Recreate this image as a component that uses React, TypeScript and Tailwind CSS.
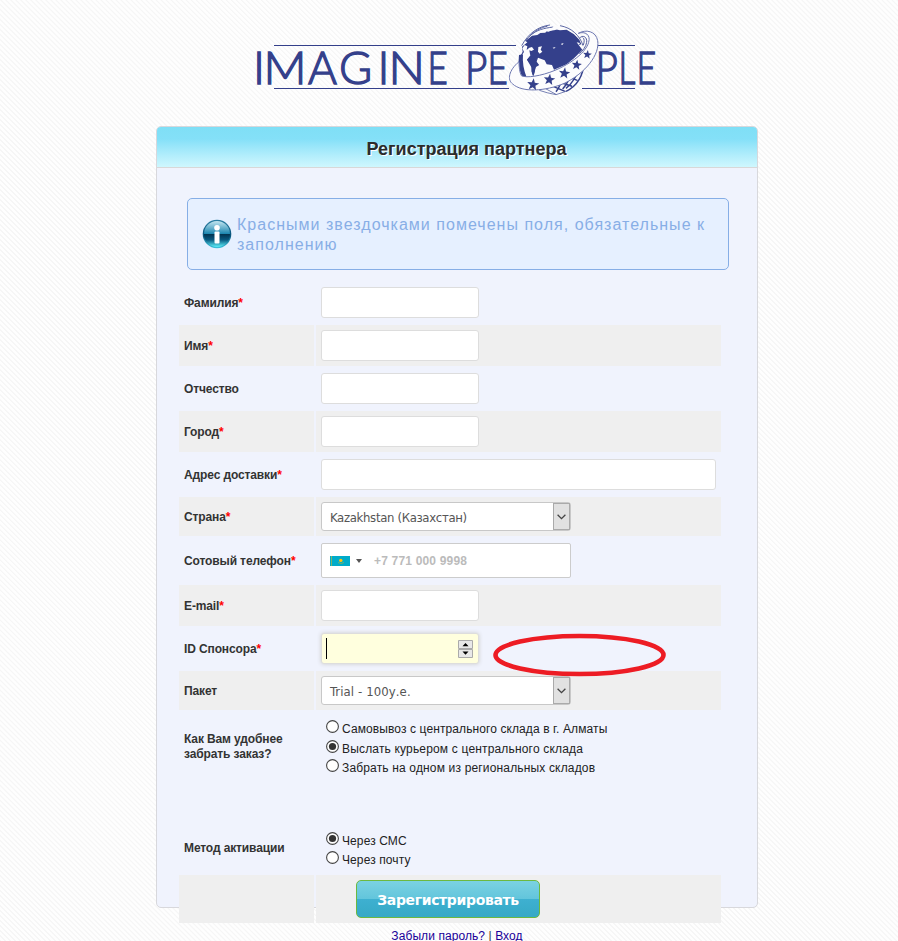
import type { ReactNode } from "react";

const STARS = [
  [249, 209, 19],
  [298, 194, 18],
  [343, 175, 18],
  [380, 150, 16],
  [412, 119, 14],
];

// Letter, left position and horizontal scale
const LETTERS: [string, number, number][] = [
  ["I", 253, 1],
  ["M", 263.5, 1.03],
  ["A", 308, 0.96],
  ["G", 339, 0.98],
  ["I", 377.5, 1],
  ["N", 388.5, 1.05],
  ["E", 427.5, 0.76],
  ["P", 465, 0.84],
  ["E", 487.5, 0.76],
  ["P", 595.5, 0.84],
  ["L", 618.5, 0.72],
  ["E", 636.5, 0.74],
];

function starPoints(cx: number, cy: number, r: number) {
  return Array.from({ length: 10 }, (_, i) => {
    const a = (Math.PI / 5) * i - Math.PI / 2 + 0.12;
    const q = i % 2 ? r * 0.42 : r;
    return `${(cx + q * Math.cos(a)).toFixed(1)},${(cy + q * Math.sin(a)).toFixed(1)}`;
  }).join(" ");
}

function Logo() {
  return (
    <svg width="420" height="80" viewBox="252 20 420 80" className="block overflow-visible" fill="#34408b">
      <g fontFamily="Lato, 'Liberation Sans', sans-serif" fontSize="46" fontWeight="300" stroke="#34408b" strokeWidth="1.4">
        {LETTERS.map(([ch, x, s]) => (
          <text key={x} transform={`translate(${x} 83.5) scale(${s} 1)`}>{ch}</text>
        ))}
      </g>
      <path d="M274 45.500H516M274 88.500H509M597 45.500H635M582 88.500H635" stroke="#34408b" strokeWidth="1.2" />
      <g transform="translate(450 15) scale(.33333)">
        <ellipse cx="306" cy="134" rx="98" ry="104" fill="#fcfcfd" />
        <g fill="none" stroke="#5c67a4" strokeWidth="3">
          <path d="M215 92C235 55 265 34 300 30M226 78C250 48 275 36 292 34M240 62C262 44 280 40 310 36M330 32C365 38 390 62 399 92" />
          <path stroke="#34408b" strokeWidth="4.500" d="M402 140C400 184 378 214 348 229M388 155C380 186 366 206 348 220M366 168C360 190 350 208 338 222M336 184C334 202 328 218 318 230M304 212L345 229M325 200L366 214M350 184L382 196" />
          <path strokeWidth="2.500" d="M268 226Q290 234 318 239L348 229M285 220L318 238" />
        </g>
        <path d="M216 95L232 82L226 78L246 62L262 60L280 48L296 50L312 42L330 46L350 44L372 58L388 74L394 88L386 90L397 104L384 118L372 130L350 148L312 164L306 150L290 148L284 136L264 128L260 140L268 150L258 156L250 184L224 188L212 160L208 130L218 110Z" />
        <path fill="#fcfcfd" d="M217 100L224 90L232 94L230 105L238 98L246 96L252 104L244 108L238 106L241 122L231 134L244 150L245 170L254 184L228 188L216 150L213 124L222 111ZM265 96L276 94L272 104L277 110L269 116L264 110ZM260 134L268 139L276 147L291 150L303 166L275 176L256 178L258 160L270 155ZM268 54L278 47L292 45L286 53ZM298 48L314 31L328 38L316 45ZM308 98L317 96L312 101ZM332 87L341 84L337 90ZM380 82L390 84L386 90Z" />
        <path d="M241 122Q256 122 256 142Q256 172 250 184Q244 176 245 158L231 134Z" />
        <path d="M207 120Q202 158 218 188L230 187Q216 154 219 118Z" />
        <path
          fill="#fcfcfd"
          stroke="#6c76b0"
          strokeWidth="3"
          d="M207 140C176 166 171 195 188 207C216 233 286 229 343 205C407 174 450 118 443 77C438 48 407 42 385 55C405 48 423 59 416 82C408 112 363 146 315 166C274 183 229 190 214 182Q207 168 207 140Z"
        />
        <path fill="none" stroke="#34408b" strokeWidth="2.500" d="M388 70C399 58 412 66 410 82C408 95 398 108 388 116M398 68Q406 72 400 90" />
        {STARS.map(([x, y, r]) => (
          <polygon key={x} points={starPoints(x, y, r)} />
        ))}
      </g>
    </svg>
  );
}

function InfoIcon() {
  return (
    <svg width="30" height="30" viewBox="0 0 30 30" className="shrink-0">
      <defs>
        <linearGradient id="rim" x1="0" y1="0" x2="0" y2="1">
          <stop offset="0" stopColor="#2b7fa3" />
          <stop offset=".55" stopColor="#07547c" />
          <stop offset="1" stopColor="#3cc4dd" />
        </linearGradient>
        <linearGradient id="ball" x1="0" y1="0" x2="0" y2="1">
          <stop offset="0" stopColor="#c3e6f0" />
          <stop offset=".49" stopColor="#1c86b0" />
          <stop offset=".5" stopColor="#02324e" />
          <stop offset=".72" stopColor="#07587f" />
          <stop offset="1" stopColor="#5ff0fa" />
        </linearGradient>
      </defs>
      <circle cx="15" cy="15" r="14.3" fill="url(#rim)" />
      <circle cx="15" cy="15" r="13" fill="url(#ball)" />
      <circle cx="15" cy="8.800" r="2.800" fill="#fff" />
      <rect x="12.500" y="12.500" width="5" height="12" rx="1" fill="#fff" />
    </svg>
  );
}

function Row({ label, required, shaded, height, children }: {
  label?: string;
  required?: boolean;
  shaded?: boolean;
  height: string;
  children?: ReactNode;
}) {
  const bg = shaded ? "bg-[#efefef]" : "";
  return (
    <div className={`flex gap-[2px] ${height}`}>
      <div className={`flex w-[135px] items-center pt-[2px] pl-[5px] text-[12px] leading-[15px] font-bold tracking-[-0.12px] text-[#333] ${bg}`}>
        <span className="whitespace-pre-line">
          {label}
          {required && <span className="text-[#f00]">*</span>}
        </span>
      </div>
      <div className={`flex w-[405px] items-center pl-[5px] ${bg}`}>{children}</div>
    </div>
  );
}

function Field({ width = "w-[158px]" }: { width?: string }) {
  return <input className={`h-[31px] rounded-[3px] border border-[#ddd] bg-white ${width}`} />;
}

function Select({ value, spacing }: { value: string; spacing: string }) {
  return (
    <div className="flex h-[29px] w-[250px] justify-between rounded-[3px] border border-[#c8c8c8] bg-white">
      <span className={`pt-[1px] pl-2 font-['DejaVu_Sans_Condensed','DejaVu_Sans',sans-serif] text-[13px] leading-[27px] text-[#555] [font-stretch:condensed] ${spacing}`}>
        {value}
      </span>
      <span className="flex w-[17px] items-center justify-center border border-[#aaa] bg-[#e1e1e1]">
        <svg width="9" height="6" viewBox="0 0 9 6" fill="none" stroke="#444" strokeWidth="1.3">
          <path d="M.6.8l3.900 3.900L8.400.8" />
        </svg>
      </span>
    </div>
  );
}

function Radio({ label, checked, spacing = "tracking-[0.1px]" }: { label: string; checked?: boolean; spacing?: string }) {
  return (
    <div className="flex h-[19.5px] items-start pl-[5px]">
      <svg width="13" height="13" viewBox="0 0 13 13" className="shrink-0">
        <circle cx="6.500" cy="6.500" r="5.900" fill="#fff" stroke="#444" strokeWidth="1.1" />
        {checked && <circle cx="6.500" cy="6.500" r="3.600" fill="#333" />}
      </svg>
      <span className={`pt-[2px] pl-[3px] text-[12px] leading-[14px] whitespace-nowrap text-[#222] ${spacing}`}>{label}</span>
    </div>
  );
}

export default function App() {
  return (
    <div className="relative h-[941px] w-[898px] overflow-hidden bg-[#fdfdfd] bg-[repeating-linear-gradient(45deg,#f6f6f6_0px,#f6f6f6_0.8px,#fefefe_1.4px,#fefefe_3.2px,#f6f6f6_3.54px)] pt-5 font-['Liberation_Sans',Arial,sans-serif]">
      <div className="pl-[252px]">
        <Logo />
      </div>
      <div className="mt-[26px] ml-[156px] h-[782px] w-[602px] rounded-[5px] border border-[#d8d8dc] bg-[#f0f3fd]">
        <h1 className="h-[41px] rounded-t-[4px] border-b border-[#d8d8d8] bg-linear-to-b from-[#7fdff6] via-[#84e0f8] via-30% to-[#cff7fe] pl-[19px] text-center text-[18px] leading-[45px] font-bold text-[#2b2b2b] [text-shadow:1px_1px_0_#fff]">
          Регистрация партнера
        </h1>
        <div className="mt-[30px] ml-[30px] flex h-[72px] w-[542px] items-center rounded-[5px] border border-[#86aee6] bg-[#e6f0ff] pl-[14px]">
          <InfoIcon />
          <p className="ml-[5px] pt-[2px] text-[16px] leading-5 tracking-[1.02px] whitespace-nowrap text-[#88aee6]">
            Красными звездочками помечены поля, обязательные к
            <br />
            заполнению
          </p>
        </div>
        <div className="mt-3 ml-[22px] flex w-[542px] flex-col gap-[2px]">
          <Row label="Фамилия" required height="h-[41px]"><Field /></Row>
          <Row label="Имя" required shaded height="h-[41px]"><Field /></Row>
          <Row label="Отчество" height="h-[41px]"><Field /></Row>
          <Row label="Город" required shaded height="h-[41px]"><Field /></Row>
          <Row label="Адрес доставки" required height="h-[41px]"><Field width="w-[395px]" /></Row>
          <Row label="Страна" required shaded height="h-[39px]">
            <Select value="Kazakhstan (Казахстан)" spacing="tracking-[-0.33px]" />
          </Row>
          <Row label="Сотовый телефон" required height="h-[45px]">
            <div className="flex h-[35px] w-[250px] items-center rounded-[2px] border border-[#ccc] bg-white pl-2">
              <svg width="20" height="10" viewBox="0 0 20 10">
                <path fill="#00abc9" d="M0 0h20v10H0z" />
                <path stroke="#7db46c" d="M1.500 0v10" />
                <path stroke="#72b46b" d="M8 6.500q3 2 6 0" fill="none" />
                <circle cx="10.800" cy="4.400" r="1.700" fill="#ffc20e" />
              </svg>
              <svg width="6" height="4" viewBox="0 0 6 4" className="ml-[6px]">
                <path d="M0 0h6L3 4z" fill="#555" />
              </svg>
              <span className="ml-3 text-[12px] font-bold tracking-[0.18px] text-[#bbb]">+7 771 000 9998</span>
            </div>
          </Row>
          <Row label="E-mail" required shaded height="h-[41px]"><Field /></Row>
          <Row label="ID Спонсора" required height="h-[41px]">
            <div className="flex h-[31px] w-[158px] items-center justify-between rounded-[3px] border border-[#ddd] bg-[#ffffde] pr-[5px] pl-1 shadow-[0_0_4px_#ccc]">
              <span className="h-[21px] w-px bg-black" />
              <svg width="15" height="18" viewBox="0 0 15 18">
                <path fill="#e8e8e8" stroke="#aaa" d="M.5.5h14v8H.5zM.5 9.500h14v8H.5z" />
                <path fill="#000" d="M4.500 6.300L7.500 3l3 3.300zM4.500 11.500h6l-3 3.300z" />
              </svg>
            </div>
          </Row>
          <Row label="Пакет" shaded height="h-[39px]">
            <Select value="Trial - 100у.е." spacing="tracking-[0.1px]" />
          </Row>
          <Row label={"Как Вам удобнее\nзабрать заказ?"} height="h-[68px]">
            <div className="pt-[7px]">
              <Radio label="Самовывоз с центрального склада в г. Алматы" />
              <Radio label="Выслать курьером с центрального склада" checked spacing="tracking-[0.17px]" />
              <Radio label="Забрать на одном из региональных складов" spacing="tracking-[0.16px]" />
            </div>
          </Row>
          <Row height="h-[38px]" />
          <Row label="Метод активации" height="h-[51px]">
            <div className="pt-[7px]">
              <Radio label="Через СМС" checked />
              <Radio label="Через почту" />
            </div>
          </Row>
          <Row shaded height="h-[48px]">
            <button className="ml-[35px] h-[38px] w-[184px] rounded-[5px] border border-[#6cb940] bg-[linear-gradient(#7bd2e2,#62c5dc_50%,#3eb0d0_51%,#36a9c6)] pt-[2px] font-['DejaVu_Sans',sans-serif] text-[14px] font-bold tracking-[-0.35px] text-white">
              Зарегистрировать
            </button>
          </Row>
        </div>
        <div className="mt-[6px] flex justify-center text-[12px] leading-[15px] tracking-[0.08px] whitespace-pre text-[#1a0099]">
          <span>Забыли пароль?</span>
          <span className="text-[#333]"> | </span>
          <span>Вход</span>
        </div>
      </div>
      <svg width="174" height="44" viewBox="0 0 174 44" className="absolute top-[633px] left-[493px]">
        <ellipse cx="86.500" cy="22" rx="84" ry="19" fill="none" stroke="#ed1c24" strokeWidth="4.600" />
      </svg>
    </div>
  );
}
